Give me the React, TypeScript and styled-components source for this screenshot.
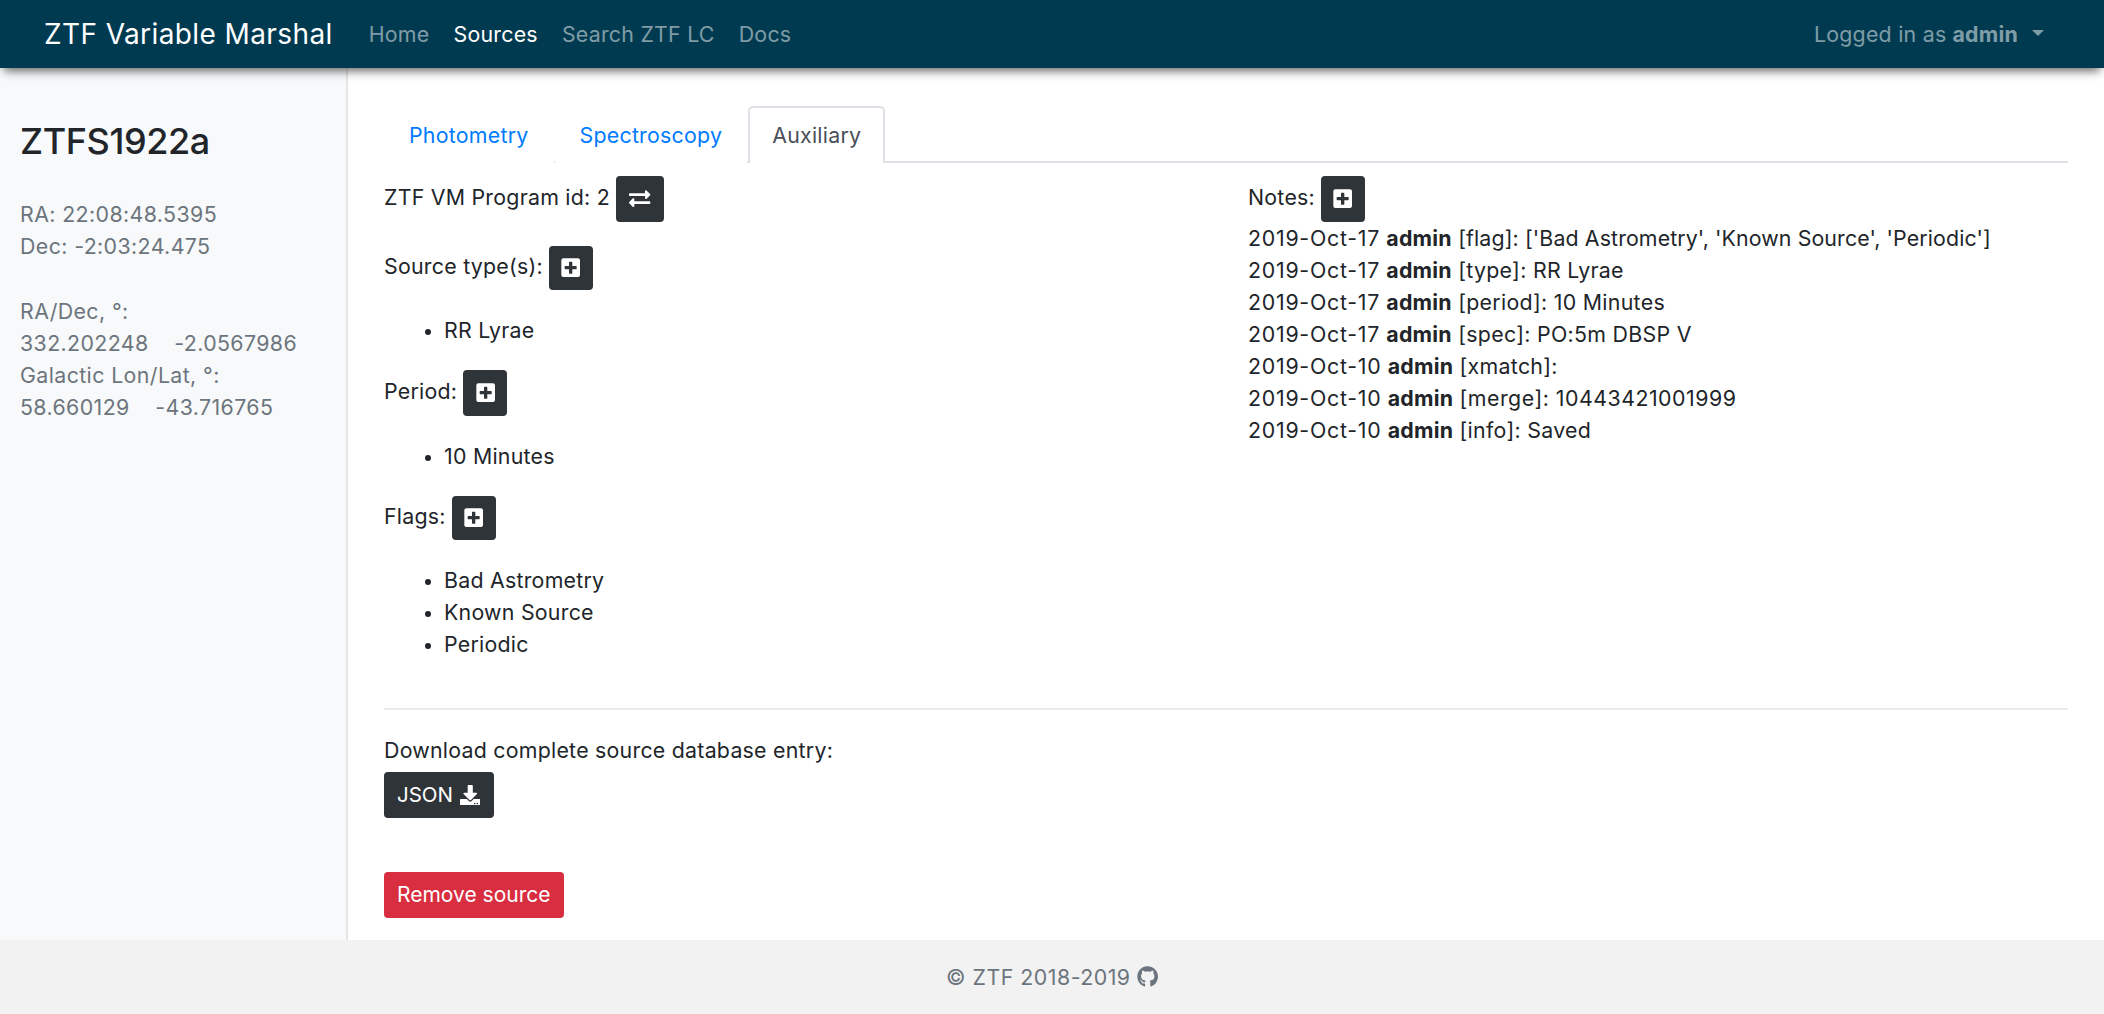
import React from 'react';
import styled, { createGlobalStyle } from 'styled-components';
import { FaExchangeAlt, FaPlusSquare, FaDownload, FaGithub } from 'react-icons/fa';

const Global = createGlobalStyle`
  html, body { margin: 0; padding: 0; height: 100%; }
  body {
    font-family: Inter, "Liberation Sans", sans-serif;
    font-size: 21.33px;
    line-height: 32px;
    letter-spacing: 0.25px;
    color: #212529;
    background: #fff;
  }
`;

const Page = styled.div`
  display: flex;
  flex-direction: column;
  height: 1014px;
  overflow: hidden;
`;

const NavBar = styled.nav`
  position: relative;
  z-index: 2;
  flex: 0 0 68px;
  display: flex;
  align-items: center;
  padding: 0 44px;
  background: #003a50;
  box-shadow: 0 7px 9px -4px rgba(0, 0, 0, 0.6);
`;

const Brand = styled.a`
  font-size: 28px;
  letter-spacing: 0.4px;
  color: #fff;
  margin-right: 36px;
  white-space: nowrap;
`;

const NavLink = styled.a<{ $active?: boolean }>`
  color: ${p => (p.$active ? '#fff' : 'rgba(255, 255, 255, 0.5)')};
  margin-right: 24px;
  white-space: nowrap;
`;

const UserMenu = styled.div`
  margin-left: auto;
  display: flex;
  align-items: center;
  color: rgba(255, 255, 255, 0.5);
  margin-right: 16px;
  b { font-weight: 700; margin-left: 6px; }
`;

const Caret = styled.span`
  width: 0;
  height: 0;
  margin-left: 14px;
  margin-top: -3px;
  border-top: 6px solid rgba(255, 255, 255, 0.5);
  border-left: 6px solid transparent;
  border-right: 6px solid transparent;
`;

const Body = styled.div`
  flex: 1;
  display: flex;
  min-height: 0;
`;

const Sidebar = styled.aside`
  flex: 0 0 348px;
  box-sizing: border-box;
  padding: 49px 20px 0;
  background: #f8f9fa;
  border-right: 2px solid #e4e6e8;
`;

const SourceName = styled.h3`
  margin: 0 0 33px;
  font-size: 36px;
  letter-spacing: -0.4px;
  font-weight: 500;
  line-height: 48px;
`;

const InfoBlock = styled.div`
  color: #6c757d;
  letter-spacing: 0.4px;
  margin-bottom: 33px;
  white-space: pre;
`;

const Main = styled.main`
  flex: 1;
  padding: 38px 36px 0 36px;
`;

const Tabs = styled.div`
  display: flex;
  height: 57px;
  box-sizing: border-box;
  border-bottom: 2px solid #dee2e6;
`;

const Tab = styled.a<{ $active?: boolean }>`
  box-sizing: border-box;
  height: 57px;
  padding: 13px 25px 0;
  margin-right: 1px;
  color: ${p => (p.$active ? '#495057' : '#007bff')};
  background: #fff;
  ${p =>
    p.$active
      ? `border: 2px solid #dee2e6; border-bottom: none; border-radius: 5px 5px 0 0; padding: 11px 22px 0;`
      : ''}
`;

const Columns = styled.div`
  display: grid;
  grid-template-columns: 864px 1fr;
  padding-top: 13px;
`;

const Column = styled.div``;

const LabelRow = styled.div<{ $gap?: number }>`
  display: flex;
  align-items: center;
  margin-bottom: ${p => p.$gap ?? 24}px;
`;

const Label = styled.span`
  padding-bottom: 5px;
`;

const IconButton = styled.button<{ $h?: number; $w?: number }>`
  display: inline-flex;
  align-items: center;
  justify-content: center;
  width: ${p => p.$w ?? 44}px;
  height: ${p => p.$h ?? 44}px;
  margin-left: 6px;
  padding: 0;
  border: none;
  border-radius: 4px;
  background: #2f3439;
  color: #fff;
  font-size: 21.33px;
`;

const Bullets = styled.ul`
  margin: 0 0 24px;
  padding: 0 0 0 60px;
  li::marker { font-size: 19px; }
`;

const NoteLine = styled.div`
  b { font-weight: 700; }
`;

const NoteDate = styled.span`
  letter-spacing: 0.75px;
`;

const NoteText = styled.span<{ $spacing: number }>`
  letter-spacing: ${p => p.$spacing}px;
`;

const Divider = styled.hr`
  margin: 24px 0 24px;
  border: none;
  border-top: 2px solid #e9ecef;
`;

const DarkButton = styled.button`
  display: flex;
  align-items: center;
  gap: 7px;
  height: 46px;
  padding: 0 14px 0 13px;
  border: none;
  border-radius: 4px;
  background: #2f3439;
  color: #fff;
  font: inherit;
  font-size: 20.5px;
  margin: 6px 0 54px;
`;

const DangerButton = styled.button`
  display: block;
  height: 46px;
  padding: 0 14px 0 13px;
  border: none;
  border-radius: 4px;
  background: #d82e3f;
  color: #fff;
  font: inherit;
  font-size: 21px;
`;

const Footer = styled.footer`
  flex: 0 0 74px;
  display: flex;
  align-items: center;
  justify-content: center;
  gap: 6px;
  background: #f2f2f2;
  color: #6c757d;
  letter-spacing: 0.5px;
  svg { font-size: 21.33px; }
`;

const notes: [string, string, number][] = [
  ['2019-Oct-17', "[flag]: ['Bad Astrometry', 'Known Source', 'Periodic']", 0.12],
  ['2019-Oct-17', '[type]: RR Lyrae', 0.3],
  ['2019-Oct-17', '[period]: 10 Minutes', 0.3],
  ['2019-Oct-17', '[spec]: PO:5m DBSP V', 0.3],
  ['2019-Oct-10', '[xmatch]:', 0.3],
  ['2019-Oct-10', '[merge]: 10443421001999', 0.5],
  ['2019-Oct-10', '[info]: Saved', 0.3],
];

export default function App() {
  return (
    <Page>
      <Global />
      <NavBar>
        <Brand>ZTF Variable Marshal</Brand>
        <NavLink>Home</NavLink>
        <NavLink $active>Sources</NavLink>
        <NavLink>Search ZTF LC</NavLink>
        <NavLink>Docs</NavLink>
        <UserMenu>
          Logged in as <b>admin</b>
          <Caret />
        </UserMenu>
      </NavBar>
      <Body>
        <Sidebar>
          <SourceName>ZTFS1922a</SourceName>
          <InfoBlock>
            RA: 22:08:48.5395{'\n'}Dec: -2:03:24.475
          </InfoBlock>
          <InfoBlock>
            RA/Dec, °:{'\n'}332.202248{'    '}-2.0567986{'\n'}Galactic Lon/Lat, °:{'\n'}58.660129{'    '}-43.716765
          </InfoBlock>
        </Sidebar>
        <Main>
          <Tabs>
            <Tab>Photometry</Tab>
            <Tab>Spectroscopy</Tab>
            <Tab $active>Auxiliary</Tab>
          </Tabs>
          <Columns>
            <Column>
              <LabelRow>
                <Label>ZTF VM Program id: 2</Label>
                <IconButton $w={48} $h={46}><FaExchangeAlt /></IconButton>
              </LabelRow>
              <LabelRow>
                <Label>Source type(s):</Label>
                <IconButton><FaPlusSquare /></IconButton>
              </LabelRow>
              <Bullets><li>RR Lyrae</li></Bullets>
              <LabelRow>
                <Label>Period:</Label>
                <IconButton $h={46}><FaPlusSquare /></IconButton>
              </LabelRow>
              <Bullets><li>10 Minutes</li></Bullets>
              <LabelRow>
                <Label>Flags:</Label>
                <IconButton><FaPlusSquare /></IconButton>
              </LabelRow>
              <Bullets>
                <li>Bad Astrometry</li>
                <li>Known Source</li>
                <li>Periodic</li>
              </Bullets>
            </Column>
            <Column>
              <LabelRow $gap={0}>
                <Label>Notes:</Label>
                <IconButton $h={46}><FaPlusSquare /></IconButton>
              </LabelRow>
              {notes.map(([date, text, spacing], i) => (
                <NoteLine key={i}>
                  <NoteDate>{date}</NoteDate> <b>admin</b> <NoteText $spacing={spacing}>{text}</NoteText>
                </NoteLine>
              ))}
            </Column>
          </Columns>
          <Divider />
          <div>Download complete source database entry:</div>
          <DarkButton>JSON <FaDownload /></DarkButton>
          <DangerButton>Remove source</DangerButton>
        </Main>
      </Body>
      <Footer>
        © ZTF 2018-2019 <FaGithub />
      </Footer>
    </Page>
  );
}
